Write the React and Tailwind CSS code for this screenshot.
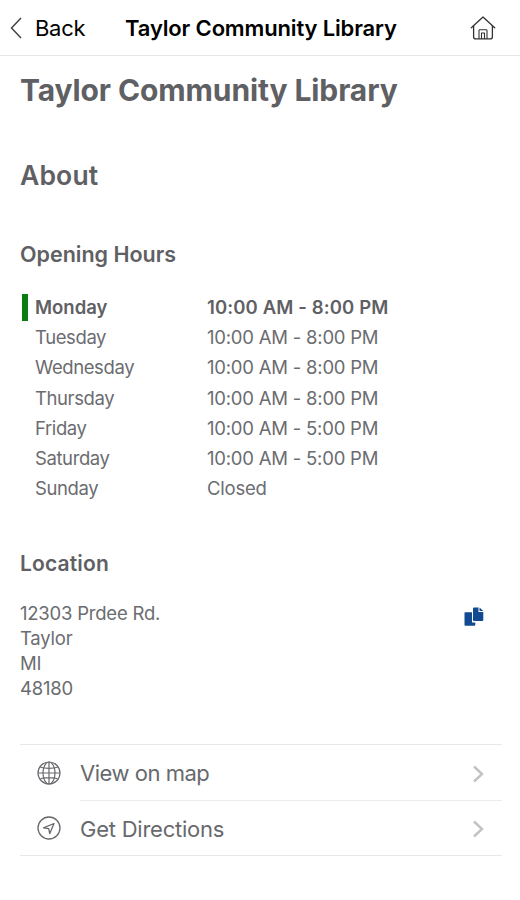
const HOURS = [
  ['Monday', '10:00 AM - 8:00 PM'],
  ['Tuesday', '10:00 AM - 8:00 PM'],
  ['Wednesday', '10:00 AM - 8:00 PM'],
  ['Thursday', '10:00 AM - 8:00 PM'],
  ['Friday', '10:00 AM - 5:00 PM'],
  ['Saturday', '10:00 AM - 5:00 PM'],
  ['Sunday', 'Closed'],
];

const ADDRESS = ['12303 Prdee Rd.', 'Taylor', 'MI', '48180'];

function HomeIcon() {
  return (
    <svg className="size-[26px]" viewBox="0 0 26 26" fill="none" stroke="#333" strokeWidth="1.3" strokeLinecap="round" strokeLinejoin="round">
      <path d="M1.300 12.700 13 1.900l11.700 10.800" />
      <path d="M3.600 11v10.700a2.200 2.200 0 0 0 2.200 2.200h14.400a2.200 2.200 0 0 0 2.200-2.200V11" />
      <path d="M9 23.500v-8a.8.8 0 0 1 .8-.8h6.400a.8.8 0 0 1 .8.8v8M11.500 23.500v-5.500h3v5.500" strokeWidth="1.100" />
    </svg>
  );
}

function GlobeIcon() {
  return (
    <svg className="size-6" viewBox="0 0 24 24" fill="none" stroke="#68696d" strokeWidth="1.200">
      <circle cx="12" cy="12" r="11" />
      <ellipse cx="12" cy="12" rx="6" ry="11" />
      <path d="M12 1v22M1 12h22M3.500 6.200c4.500 1.500 12.500 1.500 17 0M3.500 17.800c4.500-1.500 12.500-1.500 17 0" />
    </svg>
  );
}

function DirectionsIcon() {
  return (
    <svg className="size-6" viewBox="0 0 24 24" fill="none" stroke="#68696d" strokeWidth="1.300" strokeLinejoin="round">
      <circle cx="12" cy="12" r="11" />
      <path d="M17 7.500 6.500 11.800l5.200.9 1 5z" />
    </svg>
  );
}

function CopyIcon() {
  return (
    <svg className="h-5 w-5" viewBox="0 0 20 20" fill="#124a91">
      <path d="M1.200 5.200H8v10.300h3.300v2.300a1 1 0 0 1-1 1H1.500a1 1 0 0 1-1-1V6a.8.8 0 0 1 .7-.8z" />
      <path d="M10 .5h4.500V5h4.800v8a1 1 0 0 1-1 1H10a1 1 0 0 1-1-1V1.500a1 1 0 0 1 1-1z" />
      <path d="M15.500.5 19.300 4.100h-3.800z" />
    </svg>
  );
}

function Chevron() {
  return (
    <svg className="h-[18px] w-3" viewBox="0 0 12 18" fill="none" stroke="#c2c2c4" strokeWidth="2.400">
      <path d="m2 1.500 8 7.500-8 7.500" />
    </svg>
  );
}

export default function App() {
  return (
    <div className="h-[900px] w-[520px] overflow-hidden bg-white font-[Inter,'Liberation_Sans',sans-serif] whitespace-nowrap text-[#5f6064]">
      <header className="flex h-14 items-center border-b border-[#e6e6e8] pl-2.5 text-[22px] leading-7 text-black">
        <button className="flex w-[115px] items-center">
          <svg className="mr-[13px] h-[22px] w-3" viewBox="0 0 12 22" fill="none" stroke="#444" strokeWidth="1.500">
            <path d="M11 1 1.500 11 11 21" />
          </svg>
          <span className="tracking-[-0.300px]">Back</span>
        </button>
        <h1 className="w-[345px] font-semibold tracking-[-0.150px]">Taylor Community Library</h1>
        <HomeIcon />
      </header>

      <main className="pr-[18px] pl-5">
        <h2 className="pt-4 text-[30px] leading-9 font-bold tracking-[-0.110px]">Taylor Community Library</h2>
        <h3 className="mt-[49px] text-[26.500px] leading-9 font-semibold tracking-[0.150px]">About</h3>
        <h4 className="mt-[47px] text-[21.500px] leading-7 font-semibold">Opening Hours</h4>

        <div className="mt-[25px] pl-0.5">
          {HOURS.map(([day, time], i) => (
            <div key={day} className={i === 0 ? 'flex h-[30px] items-center text-[18.500px] font-semibold' : 'flex h-[30.200px] items-center text-[18.500px] text-[#6b6c70]'}>
              <span className={i === 0 ? 'mr-[7px] mb-0.5 h-[27px] w-1.5 bg-[#087d12]' : 'mr-[7px] w-1.5'} />
              <span className={i === 0 ? 'w-[172px]' : 'w-[172px] tracking-[-0.400px]'}>{day}</span>
              <span className={i === 0 ? 'tracking-[0.120px]' : 'tracking-[-0.220px]'}>{time}</span>
            </div>
          ))}
        </div>

        <h4 className="mt-[46px] text-[21px] leading-7 font-semibold tracking-[0.150px]">Location</h4>
        <div className="mt-[23px] flex justify-between pr-[18px]">
          <address className="text-[18.500px] leading-[25px] tracking-[-0.220px] text-[#6b6c70] not-italic">
            {ADDRESS.map((line) => (
              <div key={line}>{line}</div>
            ))}
          </address>
          <div className="pt-1.5">
            <CopyIcon />
          </div>
        </div>

        <nav className="mt-[43px] border-y border-[#e8e8ea] text-[22px] text-[#68696d]">
          <a className="flex h-14 items-center pl-[17px]">
            <GlobeIcon />
            <span className="ml-[19px] flex h-full flex-1 items-center justify-between border-b border-[#ececee] pt-0.5 pr-[18px]">
              <span className="tracking-[-0.480px]">View on map</span>
              <Chevron />
            </span>
          </a>
          <a className="flex h-[54px] items-center pl-[17px]">
            <DirectionsIcon />
            <span className="ml-[19px] flex h-full flex-1 items-center justify-between pt-0.5 pr-[18px]">
              <span className="tracking-[-0.240px]">Get Directions</span>
              <Chevron />
            </span>
          </a>
        </nav>
      </main>
    </div>
  );
}
